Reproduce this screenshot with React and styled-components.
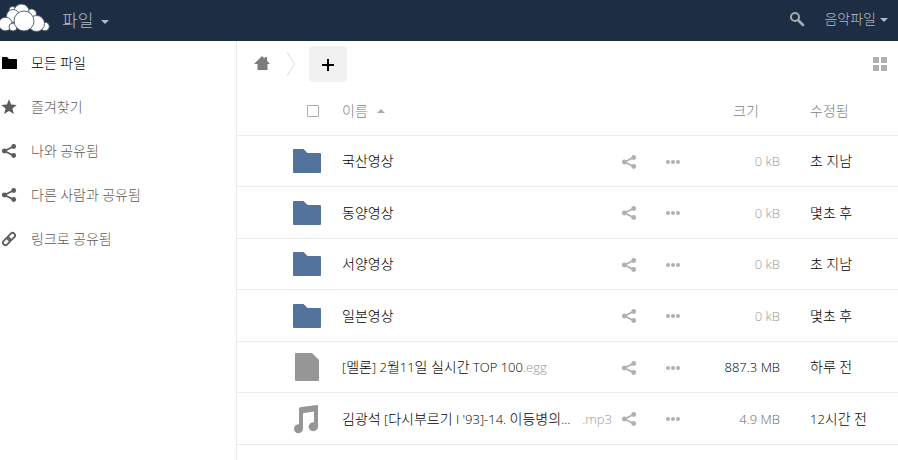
import { useState } from 'react'
import styled, { createGlobalStyle } from 'styled-components'

const views = [
    { id: 'all', label: '모든 파일', icon: 'folder' },
    { id: 'favorites', label: '즐겨찾기', icon: 'star' },
    { id: 'sharingin', label: '나와 공유됨', icon: 'share' },
    { id: 'sharingout', label: '다른 사람과 공유됨', icon: 'share' },
    { id: 'sharinglinks', label: '링크로 공유됨', icon: 'link' }
]

const files = [
    { name: '국산영상', type: 'folder', size: '0 kB', tone: '#999', modified: '초 지남' },
    { name: '동양영상', type: 'folder', size: '0 kB', tone: '#999', modified: '몇초 후' },
    { name: '서양영상', type: 'folder', size: '0 kB', tone: '#999', modified: '초 지남' },
    { name: '일본영상', type: 'folder', size: '0 kB', tone: '#999', modified: '몇초 후' },
    {
        name: '[멜론] 2월11일 실시간 TOP 100',
        ext: '.egg',
        type: 'file',
        size: '887.3 MB',
        tone: '#000',
        modified: '하루 전'
    },
    {
        name: "김광석 [다시부르기 I '93]-14. 이등병의...",
        ext: '.mp3',
        long: true,
        type: 'audio',
        size: '4.9 MB',
        tone: '#666',
        modified: '12시간 전'
    }
]

const Logo = () => (
    <svg width='50' height='34' viewBox='0 0 50 34' role='img' aria-label='ownCloud'>
        <g fill='#fff' stroke='#47546a' strokeWidth='0.9'>
            <circle cx='12.5' cy='10' r='3.5' />
            <circle cx='31.5' cy='14' r='5' />
            <circle cx='21.5' cy='11.5' r='7.5' />
            <circle cx='13' cy='16' r='6.5' />
            <circle cx='5.5' cy='24' r='6.8' />
            <circle cx='13' cy='27' r='4' />
            <circle cx='45' cy='26.5' r='4.3' />
            <circle cx='36.5' cy='23.5' r='8' />
            <circle cx='24' cy='21' r='10' />
        </g>
    </svg>
)

const Icon = ({ name }) => (
    <svg width='16' height='16' viewBox='0 0 16 16' fill='currentColor' aria-hidden='true'>
        {name === 'folder' && <path d='M1.5 2H6l2 2h7.500q.5 0 .5.5v9q0 .5-.5.5h-14q-.5 0-.5-.5v-11Q1 2 1.5 2z' />}
        {name === 'star' && <path d='M8 .3l2.1 5.3 5.7.3-4.4 3.6 1.5 5.5L8 11.9 3.1 15l1.5-5.5L.2 5.9l5.7-.3z' />}
        {name === 'share' && (
            <>
                <path d='M12.5 3.5L3.5 8l9 4.5' fill='none' stroke='currentColor' strokeWidth='1.8' />
                <circle cx='12.7' cy='3.5' r='2.4' />
                <circle cx='3.3' cy='8' r='2.4' />
                <circle cx='12.7' cy='12.5' r='2.4' />
            </>
        )}
        {name === 'link' && (
            <g fill='none' stroke='currentColor' strokeWidth='1.8' transform='rotate(-45 8 8)'>
                <rect x='0.5' y='5.5' width='8.5' height='5' rx='2.5' />
                <rect x='7' y='5.5' width='8.5' height='5' rx='2.5' />
            </g>
        )}
        {name === 'search' && (
            <>
                <circle cx='6' cy='6' r='4' fill='none' stroke='currentColor' strokeWidth='2' />
                <path d='M9 9l5 5' stroke='currentColor' strokeWidth='2.6' strokeLinecap='round' />
            </>
        )}
        {name === 'home' && <path d='M8 1l2.8 2.7V2H13v3.8L16 9h-2.5v6h-10V9H0z' />}
        {name === 'more' && (
            <>
                <circle cx='3' cy='8' r='2' />
                <circle cx='8' cy='8' r='2' />
                <circle cx='13' cy='8' r='2' />
            </>
        )}
        {name === 'grid' && <path d='M1 1h6v6H1zM9 1h6v6H9zM1 9h6v6H1zM9 9h6v6H9z' />}
        {name === 'plus' && <path d='M7 3h2v5h5v2H9v5H7v-5H2V8h5z' />}
    </svg>
)

const FileIcon = ({ type }) => (
    <svg width='32' height='32' viewBox='0 0 32 32' aria-hidden='true'>
        {type === 'folder' && <path fill='#54739c' d='M3 4h9.5l4 4H29q1 0 1 1v18q0 1-1 1H3q-1 0-1-1V5q0-1 1-1z' />}
        {type === 'file' && <path fill='#969696' d='M5 2h16l7 7v20q0 1-1 1H5q-1 0-1-1V3q0-1 1-1z' />}
        {type === 'audio' && (
            <path
                fill='#969696'
                d='M8 5.5Q8 4.5 9 4.3L26 2q1-.1 1 1v20.500a4.700 4.500 0 1 1-4-4.200V8.500l-11 1.800V25.500a4.500 4.500 0 1 1-4-4.200z'
            />
        )}
    </svg>
)

// Hangul is set one size above the latin letters around it
const Mixed = ({ text }) =>
    text.split(/([가-힣]+)/).map((part, i) => (i % 2 ? <Hangul key={i}>{part}</Hangul> : part))

const App = () => {
    const [view, setView] = useState('all')

    return (
        <>
            <GlobalStyle />
            <Header>
                <AppMenu>
                    <Logo />
                    <MenuButton $large>
                        파일 <Caret />
                    </MenuButton>
                </AppMenu>
                <UserMenu>
                    <SearchButton aria-label='검색'>
                        <Icon name='search' />
                    </SearchButton>
                    <MenuButton>
                        음악파일 <Caret />
                    </MenuButton>
                </UserMenu>
            </Header>
            <Body>
                <Sidebar>
                    {views.map(({ id, label, icon }) => (
                        <NavLink key={id} href={`#${id}`} $active={view === id} onClick={() => setView(id)}>
                            <Icon name={icon} />
                            <span>
                                <Mixed text={label} />
                            </span>
                        </NavLink>
                    ))}
                </Sidebar>
                <Content>
                    <Controls>
                        <HomeLink href='#home' aria-label='홈'>
                            <Icon name='home' />
                        </HomeLink>
                        <Crumb width='10' height='26' viewBox='0 0 10 26' aria-hidden='true'>
                            <path d='M1 1l7.5 12L1 25' />
                        </Crumb>
                        <NewButton aria-label='새로 만들기'>
                            <Icon name='plus' />
                        </NewButton>
                        <GridButton aria-label='격자 보기'>
                            <Icon name='grid' />
                        </GridButton>
                    </Controls>
                    <Table>
                        <thead>
                            <HeadRow>
                                <PickHead>
                                    <Checkbox type='checkbox' aria-label='모두 선택' />
                                </PickHead>
                                <HeadCell>
                                    <SortButton>
                                        이름 <Caret $up />
                                    </SortButton>
                                </HeadCell>
                                <ActionHead />
                                <SizeHead>크기</SizeHead>
                                <DateHead>수정됨</DateHead>
                            </HeadRow>
                        </thead>
                        <tbody>
                            {files.map(({ name, ext, long, type, size, tone, modified }) => (
                                <Row key={name}>
                                    <IconCell>
                                        <FileIcon type={type} />
                                    </IconCell>
                                    <Cell>
                                        <FileLink href='#file' $long={long}>
                                            <span>
                                                <Mixed text={name} />
                                            </span>
                                            {ext && <Ext>{ext}</Ext>}
                                        </FileLink>
                                    </Cell>
                                    <Cell>
                                        <Actions>
                                            <Button aria-label='공유'>
                                                <Icon name='share' />
                                            </Button>
                                            <Button aria-label='더 보기'>
                                                <Icon name='more' />
                                            </Button>
                                        </Actions>
                                    </Cell>
                                    <SizeCell $tone={tone}>{size}</SizeCell>
                                    <DateCell>
                                        <Mixed text={modified} />
                                    </DateCell>
                                </Row>
                            ))}
                        </tbody>
                    </Table>
                </Content>
            </Body>
        </>
    )
}

const GlobalStyle = createGlobalStyle`
    * {
        box-sizing: border-box;
    }
    body {
        margin: 0;
        background-color: #fff;
        color: #000;
        font-family: 'Open Sans', 'Noto Sans CJK KR', sans-serif;
        font-size: 13px;
        font-weight: 300;
        line-height: 20px;
    }
    svg {
        display: block;
        flex-shrink: 0;
    }
`

const Button = styled.button`
    border: 0;
    padding: 0;
    background: none;
    color: #b0b0b0;
    font: inherit;
    cursor: pointer;
`

const Hangul = styled.span`
    font-size: 14px;
`

const Header = styled.header`
    display: flex;
    justify-content: space-between;
    height: 41px;
    padding-right: 10px;
    background-color: #1d2d44;
`

const AppMenu = styled.div`
    display: flex;
    align-items: flex-start;
    gap: 12px;
`

const UserMenu = styled.div`
    display: flex;
    align-items: center;
    gap: 19px;
    padding-bottom: 4px;
`

const MenuButton = styled(Button)`
    display: flex;
    align-items: center;
    gap: ${props => (props.$large ? '8px' : '4px')};
    height: 41px;
    color: #b4bac2;
    font-size: ${props => (props.$large ? '17px' : '14px')};
`

const Caret = styled.span`
    border: 4px solid transparent;
    border-top-color: ${props => (props.$up ? 'transparent' : 'currentColor')};
    border-bottom-color: ${props => (props.$up ? '#aaa' : 'transparent')};
    margin-top: ${props => (props.$up ? '-4px' : '6px')};
`

const SearchButton = styled(Button)`
    color: #a5abb4;
`

const Body = styled.div`
    display: flex;
    min-height: calc(100vh - 41px);
`

const Sidebar = styled.nav`
    width: 237px;
    flex-shrink: 0;
    border-right: 1px solid #ebebeb;
`

const NavLink = styled.a`
    display: flex;
    align-items: center;
    gap: 14px;
    height: 44px;
    padding-left: 1px;
    color: ${props => (props.$active ? '#000' : '#5c5c5c')};
    text-decoration: none;
`

const Content = styled.main`
    flex: 1;
    min-width: 0;
`

const Controls = styled.div`
    display: flex;
    align-items: center;
    height: 46px;
    padding: 0 10px 0 17px;
`

const HomeLink = styled.a`
    padding-bottom: 2px;
    color: #7c7c7c;
`

const Crumb = styled.svg`
    margin: 0 13px 0 16px;
    fill: none;
    stroke: #ddd;
`

const NewButton = styled(Button)`
    display: flex;
    align-items: center;
    justify-content: center;
    width: 38px;
    height: 36px;
    border-radius: 3px;
    background-color: #f1f1f1;
    color: #000;
`

const GridButton = styled(Button)`
    margin-left: auto;
`

const Table = styled.table`
    width: 100%;
    table-layout: fixed;
    border-collapse: collapse;
`

const Cell = styled.td`
    padding: 1px 0 0;
    border-bottom: 1px solid #ebebeb;
    white-space: nowrap;
`

const HeadCell = styled.th`
    padding: 0;
    border-bottom: 1px solid #ebebeb;
    color: #808080;
    font-size: 14px;
    font-weight: 300;
    text-align: left;
    white-space: nowrap;
`

const PickHead = styled(HeadCell)`
    width: 105px;
    padding-left: 70px;
`

const ActionHead = styled(HeadCell)`
    width: 90px;
`

const SizeHead = styled(HeadCell)`
    width: 78px;
    padding-right: 21px;
    text-align: right;
`

const DateHead = styled(HeadCell)`
    width: 118px;
    padding-left: 30px;
`

const IconCell = styled(Cell)`
    padding-left: 54px;
`

const SizeCell = styled(Cell)`
    color: ${props => props.$tone};
    text-align: right;
`

const DateCell = styled(Cell)`
    padding-left: 30px;
`

const HeadRow = styled.tr`
    height: 48px;
`

const Row = styled.tr`
    height: 51px;

    &:nth-child(even) {
        height: 52px;
    }
`

const Checkbox = styled.input`
    appearance: none;
    display: block;
    width: 12px;
    height: 12px;
    margin: 0;
    border: 1px solid #aaa;
    border-radius: 1px;
`

const SortButton = styled(Button)`
    display: flex;
    align-items: center;
    gap: 9px;
    color: #808080;
`

const FileLink = styled.a`
    display: flex;
    justify-content: ${props => (props.$long ? 'space-between' : 'flex-start')};
    max-width: 270px;
    color: #000;
    text-decoration: none;
`

const Ext = styled.span`
    color: #999;
`

const Actions = styled.div`
    display: flex;
    justify-content: flex-end;
    gap: 28px;
    padding: 1px 21px 0 0;
`

export default App
